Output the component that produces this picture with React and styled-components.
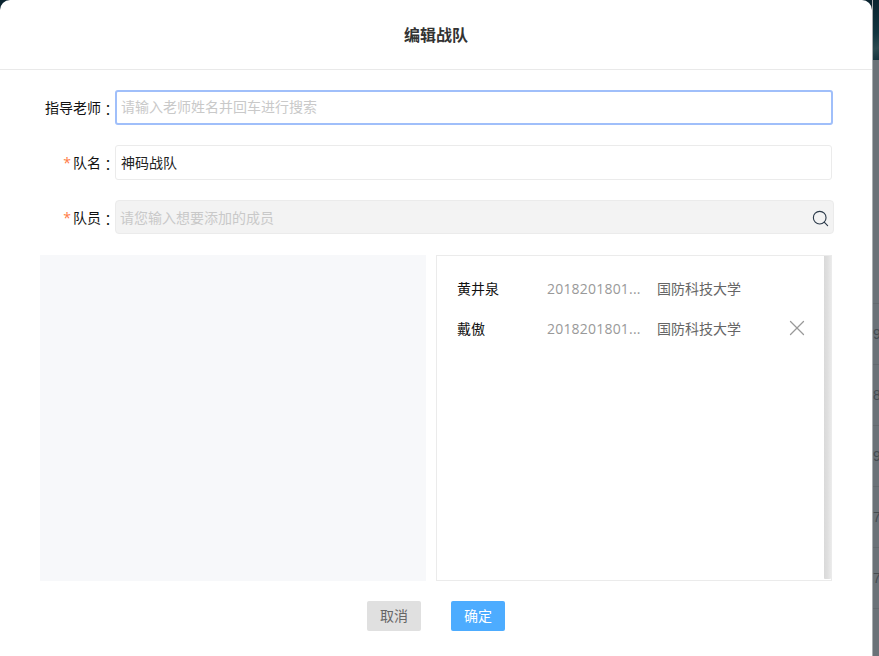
import React from 'react';
import styled, { createGlobalStyle } from 'styled-components';
import { Search, X } from 'lucide-react';

const GlobalStyle = createGlobalStyle`
  html, body {
    margin: 0;
    padding: 0;
    height: 100%;
    overflow: hidden;
    background: #6b7278;
  }
  * {
    box-sizing: border-box;
  }
  body, input, button {
    font-family: 'Open Sans', 'Noto Sans CJK SC', sans-serif;
  }
`;

const Page = styled.div`
  width: 879px;
  height: 656px;
  background: linear-gradient(#0a2430 0, #0a2430 60px, #6b7278 60px);
  display: flex;
  flex-flow: row nowrap;
  overflow: hidden;
`;

const Modal = styled.div`
  width: 872px;
  height: 656px;
  flex: none;
  background: white;
  border-radius: 10px 10px 0 0;
  display: flex;
  flex-flow: column nowrap;
`;

const Backdrop = styled.div`
  flex: 1;
  border-left: 1px solid #a9adb0;
  overflow: hidden;
  display: flex;
  flex-flow: column nowrap;
`;

const BackdropBanner = styled.div`
  height: 60px;
  flex: none;
  background: linear-gradient(160deg, #0a2430 0%, #123640 55%, #2c4a50 80%, #14323c 100%);
`;

const BackdropGap = styled.div`
  height: 244px;
  flex: none;
  border-bottom: 1px solid #63696e;
`;

const BackdropRow = styled.div`
  height: 61px;
  flex: none;
  border-bottom: 1px solid #63696e;
  color: #454b50;
  font-family: 'Liberation Sans', sans-serif;
  font-size: 14px;
  line-height: 61px;
`;

const Header = styled.div`
  height: 70px;
  flex: none;
  padding-bottom: 2px;
  border-bottom: 1px solid #e9e9e9;
  display: flex;
  align-items: center;
  justify-content: center;
  color: #333;
  font-size: 16px;
  font-weight: bold;
`;

const Form = styled.div`
  flex: 1;
  padding: 20px 38px 0 40px;
  display: flex;
  flex-flow: column nowrap;
`;

const FormRow = styled.div`
  display: flex;
  flex-flow: row nowrap;
  align-items: center;
  height: ${(props) => props.$height}px;
  margin-bottom: ${(props) => props.$gap}px;
`;

const Label = styled.label`
  width: 75px;
  flex: none;
  padding-top: ${(props) => (props.$lowered ? '2px' : '0')};
  text-align: right;
  font-size: 14px;
  line-height: 20px;
  color: #111;
  white-space: nowrap;
`;

const Star = styled.span`
  color: #ff7a45;
  margin-right: 2px;
`;

const Colon = styled.span`
  font-family: 'Noto Sans CJK TC', sans-serif;
  line-height: 1;
  vertical-align: -2px;
`;

const TextInput = styled.input`
  width: ${(props) => (props.$focused ? '718px' : '717px')};
  height: 100%;
  padding: 0 ${(props) => (props.$focused ? '4px' : '5px')} 2px;
  font-size: 14px;
  color: #222;
  background: white;
  border-style: solid;
  border-color: ${(props) => (props.$focused ? '#a0bffa' : '#ebebeb')};
  border-width: ${(props) => (props.$focused ? '2px' : '1px')};
  border-radius: 3px;
  outline: none;

  &::placeholder {
    color: #c9c9c9;
    opacity: 1;
  }
`;

const SearchBox = styled.div`
  width: 719px;
  height: 100%;
  position: relative;
  display: flex;
  align-items: center;
  background: #f3f3f3;
  border: 1px solid #ebebeb;
  border-radius: 4px;
`;

const SearchInput = styled.input`
  flex: 1;
  height: 100%;
  padding: 0 5px 0 4px;
  font-size: 14px;
  background: transparent;
  border: none;
  outline: none;

  &::placeholder {
    color: #c9c9c9;
    opacity: 1;
  }
`;

const SearchIcon = styled(Search)`
  position: absolute;
  right: 3px;
  top: 8px;
  color: #2b3a4a;
`;

const Panels = styled.div`
  display: flex;
  flex-flow: row nowrap;
  gap: 10px;
  height: 326px;
  margin-top: 21px;
`;

const LeftPanel = styled.div`
  width: 386px;
  background: #f7f8fa;
`;

const RightPanel = styled.div`
  width: 396px;
  border: 1px solid #ebebeb;
  display: flex;
  flex-flow: row nowrap;
`;

const MemberList = styled.div`
  flex: 1;
  padding: 12px 0 0 20px;
  display: flex;
  flex-flow: column nowrap;
`;

const Scrollbar = styled.div`
  width: 7px;
  flex: none;
  margin-bottom: 1px;
  border-radius: 0 0 1px 1px;
  background: linear-gradient(to right, #d9d9d9, #dfdfdf 50%, #e9e9e9);
`;

const MemberRow = styled.div`
  height: 40px;
  display: flex;
  flex-flow: row nowrap;
  align-items: center;
  font-size: 14px;
`;

const MemberName = styled.span`
  width: 90px;
  flex: none;
  color: #111;
`;

const MemberId = styled.span`
  width: 110px;
  flex: none;
  color: #999;
  letter-spacing: 0.2px;
`;

const MemberSchool = styled.span`
  width: 127px;
  flex: none;
  color: #666;
`;

const RemoveIcon = styled(X)`
  color: #999;
`;

const Footer = styled.div`
  display: flex;
  flex-flow: row nowrap;
  justify-content: center;
  gap: 30px;
  margin-top: 20px;
  padding-right: 2px;
`;

const Button = styled.button`
  width: 54px;
  height: 30px;
  padding: 0 0 2px;
  border: none;
  border-radius: 2px;
  font-size: 14px;
  color: ${(props) => (props.$primary ? 'white' : '#666')};
  background: ${(props) => (props.$primary ? '#4dacff' : '#e0e0e0')};
`;

const members = [
  { name: '黄井泉', id: '2018201801...', school: '国防科技大学', removable: false },
  { name: '戴傲', id: '2018201801...', school: '国防科技大学', removable: true },
];

const backdropDigits = ['9', '8', '9', '7', '7'];

const App = () => {
  return (
    <Page>
      <GlobalStyle />
      <Modal>
        <Header>编辑战队</Header>
        <Form>
          <FormRow $height={35} $gap={20}>
            <Label>
              指导老师<Colon>：</Colon>
            </Label>
            <TextInput $focused placeholder="请输入老师姓名并回车进行搜索" />
          </FormRow>
          <FormRow $height={35} $gap={20}>
            <Label>
              <Star>*</Star>队名<Colon>：</Colon>
            </Label>
            <TextInput defaultValue="神码战队" />
          </FormRow>
          <FormRow $height={34} $gap={0}>
            <Label $lowered>
              <Star>*</Star>队员<Colon>：</Colon>
            </Label>
            <SearchBox>
              <SearchInput placeholder="请您输入想要添加的成员" />
              <SearchIcon size={19} strokeWidth={1.4} />
            </SearchBox>
          </FormRow>
          <Panels>
            <LeftPanel />
            <RightPanel>
              <MemberList>
                {members.map((member) => (
                  <MemberRow key={member.name}>
                    <MemberName>{member.name}</MemberName>
                    <MemberId>{member.id}</MemberId>
                    <MemberSchool>{member.school}</MemberSchool>
                    {member.removable && <RemoveIcon size={26} strokeWidth={1.2} />}
                  </MemberRow>
                ))}
              </MemberList>
              <Scrollbar />
            </RightPanel>
          </Panels>
          <Footer>
            <Button>取消</Button>
            <Button $primary>确定</Button>
          </Footer>
        </Form>
      </Modal>
      <Backdrop>
        <BackdropBanner />
        <BackdropGap />
        {backdropDigits.map((digit, index) => (
          <BackdropRow key={index}>{digit}</BackdropRow>
        ))}
      </Backdrop>
    </Page>
  );
};

export default App;
